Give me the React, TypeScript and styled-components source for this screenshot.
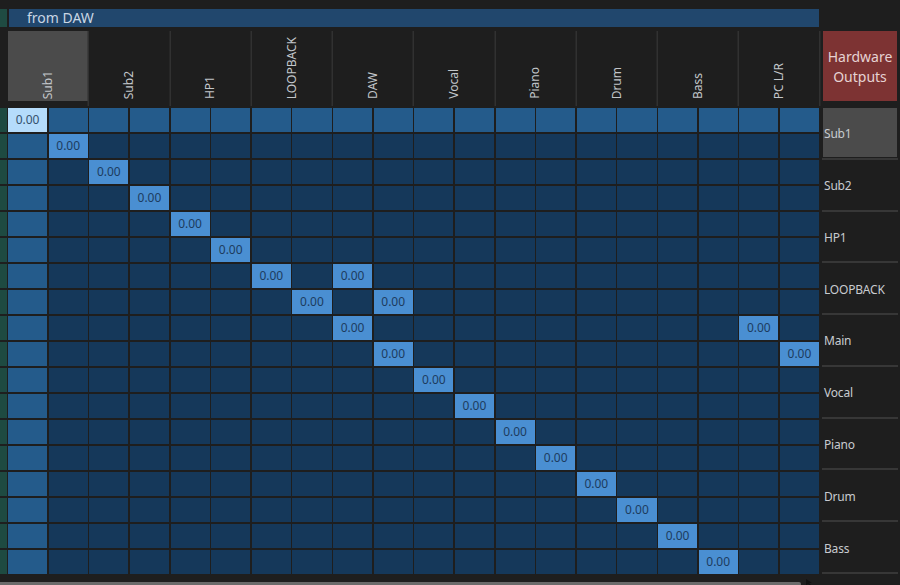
import React from 'react';
import styled, { createGlobalStyle } from 'styled-components';

const Global = createGlobalStyle`
  html, body { margin: 0; padding: 0; background: #1e1e1e; }
  body { font-family: "Noto Sans", "Open Sans", sans-serif; overflow: hidden; }
  * { box-sizing: border-box; }
`;

const Page = styled.div`
  position: relative;
  width: 900px;
  height: 585px;
  overflow: hidden;
  background: #1e1e1e;
  padding-top: 9px;
`;

const TitleRow = styled.div`
  display: flex;
  gap: 2px;
  height: 18px;
`;

const TitleStub = styled.div`
  width: 7px;
  background: #1f4b42;
`;

const TitleBar = styled.div`
  width: 810px;
  background: #21476d;
  color: #c9d6e4;
  font-size: 14px;
  line-height: 18px;
  padding-left: 18px;
`;

const Body = styled.div`
  display: flex;
  align-items: flex-start;
  margin-top: 4px;
`;

const LeftStrip = styled.div`
  width: 7px;
  margin-right: 1px;
  padding-top: 77px;
  display: flex;
  flex-direction: column;
  gap: 2px;
`;

const StripCell = styled.div`
  height: 24px;
  background: #1e4a41;
`;

const Matrix = styled.div`
  width: 811px;
  display: flex;
  flex-direction: column;
  gap: 2px;
`;

const HeaderGrid = styled.div`
  display: grid;
  grid-template-columns: repeat(10, 1fr);
  column-gap: 1.5px;
  height: 75px;
`;

const HeaderGroup = styled.div<{ $divider: boolean; $last: boolean }>`
  display: flex;
  padding-bottom: 5px;
  box-shadow: ${(p) =>
    [p.$divider ? '-1.5px 0 0 0 #313131' : '', p.$last ? '1.5px 0 0 0 #313131' : '']
      .filter(Boolean)
      .join(', ') || 'none'};
`;

const HeaderInner = styled.div<{ $selected: boolean }>`
  flex: 1;
  display: flex;
  flex-direction: column;
  align-items: center;
  justify-content: flex-end;
  padding-bottom: 2px;
  background: ${(p) => (p.$selected ? '#4b4b4b' : 'transparent')};
`;

const HeaderText = styled.span`
  writing-mode: vertical-rl;
  transform: rotate(180deg);
  font-size: 12px;
  line-height: 14px;
  color: #c2c6ca;
  white-space: nowrap;
`;

const CellGrid = styled.div`
  display: grid;
  grid-template-columns: repeat(20, 1fr);
  grid-auto-rows: 24px;
  gap: 2px 1.5px;
`;

type Variant = 'dark' | 'light' | 'active' | 'selected';

const cellBg: Record<Variant, string> = {
  dark: '#15385a',
  light: '#245b8b',
  active: '#4a8fd2',
  selected: '#b5dcfb',
};

const cellFg: Record<Variant, string> = {
  dark: 'transparent',
  light: 'transparent',
  active: '#1d3c5f',
  selected: '#34506d',
};

const Cell = styled.div<{ $variant: Variant }>`
  display: flex;
  align-items: center;
  justify-content: center;
  background: ${(p) => cellBg[p.$variant]};
  color: ${(p) => cellFg[p.$variant]};
  font-size: 12px;
  line-height: 24px;
`;

const RightPanel = styled.div`
  width: 76px;
  margin-left: 3px;
  display: flex;
  flex-direction: column;
`;

const OutputsButton = styled.div`
  width: 74px;
  height: 70px;
  margin-left: 1px;
  margin-bottom: 7px;
  padding-top: 2px;
  background: #7d3333;
  color: #e6d2d2;
  font-size: 14px;
  line-height: 20px;
  text-align: center;
  display: flex;
  align-items: center;
  justify-content: center;
`;

const LabelBlock = styled.div`
  height: calc(466px / 9);
  border-bottom: 2px solid #373737;
  display: flex;
`;

const LabelBox = styled.div<{ $selected: boolean }>`
  flex: 1;
  margin: 0 1px 1px;
  display: flex;
  align-items: center;
  padding: 3px 0 0 1px;
  background: ${(p) => (p.$selected ? '#4b4b4b' : 'transparent')};
  color: #c8cbd0;
  font-size: 12px;
  letter-spacing: -0.2px;
`;

const ScrollBar = styled.div`
  width: 801px;
  height: 4px;
  margin-top: 8px;
  background: #6b6b6b;
  border-radius: 0 3px 3px 0;
`;

const Pointer = styled.svg`
  position: absolute;
  left: 806px;
  top: 579px;
`;

const columns = ['Sub1', 'Sub2', 'HP1', 'LOOPBACK', 'DAW', 'Vocal', 'Piano', 'Drum', 'Bass', 'PC L/R'];
const outputs = ['Sub1', 'Sub2', 'HP1', 'LOOPBACK', 'Main', 'Vocal', 'Piano', 'Drum', 'Bass'];

const activeMap: Record<number, number[]> = {
  0: [0],
  1: [1],
  2: [2],
  3: [3],
  4: [4],
  5: [5],
  6: [6, 8],
  7: [7, 9],
  8: [8, 18],
  9: [9, 19],
  10: [10],
  11: [11],
  12: [12],
  13: [13],
  14: [14],
  15: [15],
  16: [16],
  17: [17],
};

const ROWS = 18;
const COLS = 20;

function variantFor(r: number, c: number): Variant {
  if (r === 0 && c === 0) return 'selected';
  if (activeMap[r]?.includes(c)) return 'active';
  if (r === 0 || c === 0) return 'light';
  return 'dark';
}

export default function App() {
  const cells: React.ReactNode[] = [];
  for (let r = 0; r < ROWS; r++) {
    for (let c = 0; c < COLS; c++) {
      const v = variantFor(r, c);
      cells.push(
        <Cell key={`${r}-${c}`} $variant={v}>
          {v === 'active' || v === 'selected' ? '0.00' : ''}
        </Cell>
      );
    }
  }

  return (
    <>
      <Global />
      <Page>
        <TitleRow>
          <TitleStub />
          <TitleBar>from DAW</TitleBar>
        </TitleRow>
        <Body>
          <LeftStrip>
            {Array.from({ length: ROWS }).map((_, i) => (
              <StripCell key={i} />
            ))}
          </LeftStrip>
          <Matrix>
            <HeaderGrid>
              {columns.map((name, i) => (
                <HeaderGroup key={name} $divider={i > 0} $last={i === columns.length - 1}>
                  <HeaderInner $selected={i === 0}>
                    <HeaderText>{name}</HeaderText>
                  </HeaderInner>
                </HeaderGroup>
              ))}
            </HeaderGrid>
            <CellGrid>{cells}</CellGrid>
          </Matrix>
          <RightPanel>
            <OutputsButton>
              Hardware
              <br />
              Outputs
            </OutputsButton>
            {outputs.map((name, i) => (
              <LabelBlock key={name}>
                <LabelBox $selected={i === 0}>{name}</LabelBox>
              </LabelBlock>
            ))}
          </RightPanel>
        </Body>
        <ScrollBar />
        <Pointer width="8" height="8" viewBox="0 0 8 8">
          <polygon points="0,0 0,7 2,5 5,8 6,7 3,4 6,4" fill="#111" />
        </Pointer>
      </Page>
    </>
  );
}
